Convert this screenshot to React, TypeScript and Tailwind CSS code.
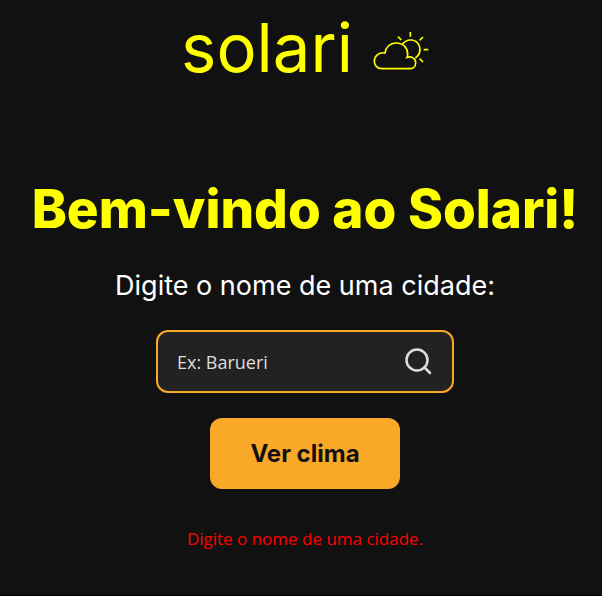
import { useState } from "react";
import type { FormEvent } from "react";

function CloudSunIcon() {
  return (
    <svg
      viewBox="34 32 168 117"
      className="mt-1 h-[39px] w-14 shrink-0 overflow-visible"
      fill="none"
      stroke="currentColor"
      strokeWidth="5"
      strokeLinecap="butt"
      aria-hidden="true"
    >
      <path d="M60 145C46 145 38 134 38 122C38 107 53 94 70 98C72 80 85 68 104 68C125 68 138 83 138 102Q138 107 136 111C149 107 162 114 162 127C162 138 154 145 144 145Z" />
      <path d="M122 72C137 52 165 56 173 77C178 91 173 106 161 113" />
      <path d="M146 35V49M184 50L174 60M186 88H200M174 115L184 125M109 49L119 59" />
    </svg>
  );
}

function SearchIcon() {
  return (
    <svg viewBox="0 0 28 28" className="size-7" fill="none" stroke="currentColor" strokeWidth="2.5" strokeLinecap="round" aria-hidden="true">
      <circle cx="13" cy="12" r="10.5" />
      <path d="M20.5 19.5L26 25" />
    </svg>
  );
}

export default function App() {
  const [city, setCity] = useState("");
  const submit = (event: FormEvent) => event.preventDefault();

  return (
    <div className="flex min-h-screen flex-col items-center border-b border-black bg-[#111111] pl-2 font-['Inter',sans-serif] text-white">
      <header className="flex h-24 items-center gap-5 text-[#ffff00]">
        <span className="text-[67px] leading-24">solari</span>
        <CloudSunIcon />
      </header>
      <main className="flex w-full flex-col items-center pt-20">
        <h1 className="text-[53px] leading-[66px] font-extrabold whitespace-nowrap text-[#ffff00]">Bem-vindo ao Solari!</h1>
        <form onSubmit={submit} noValidate className="flex w-full flex-col items-center pt-6">
          <label htmlFor="city" className="text-[27px] leading-10">Digite o nome de uma cidade:</label>
          <div className="mt-6 flex h-[63px] w-[298px] items-center rounded-xl border-2 border-[#faa827] bg-[#222222] pr-5 pl-[19px] text-[#dddddd]">
            <input
              id="city"
              type="text"
              value={city}
              onChange={(event) => setCity(event.target.value)}
              placeholder="Ex: Barueri"
              aria-describedby="city-error"
              className="min-w-0 flex-1 bg-transparent font-['Open_Sans',sans-serif] text-lg outline-none placeholder:text-[#dddddd]"
            />
            <button type="submit" aria-label="Buscar">
              <SearchIcon />
            </button>
          </div>
          <button type="submit" className="mt-[25px] h-[71px] w-[190px] rounded-xl bg-[#faa827] text-2xl font-bold text-[#111111]">
            Ver clima
          </button>
          <p id="city-error" role="alert" className="mt-9 font-['Open_Sans',sans-serif] text-[17px] leading-7 text-[#ff0000]">
            Digite o nome de uma cidade.
          </p>
        </form>
      </main>
    </div>
  );
}
